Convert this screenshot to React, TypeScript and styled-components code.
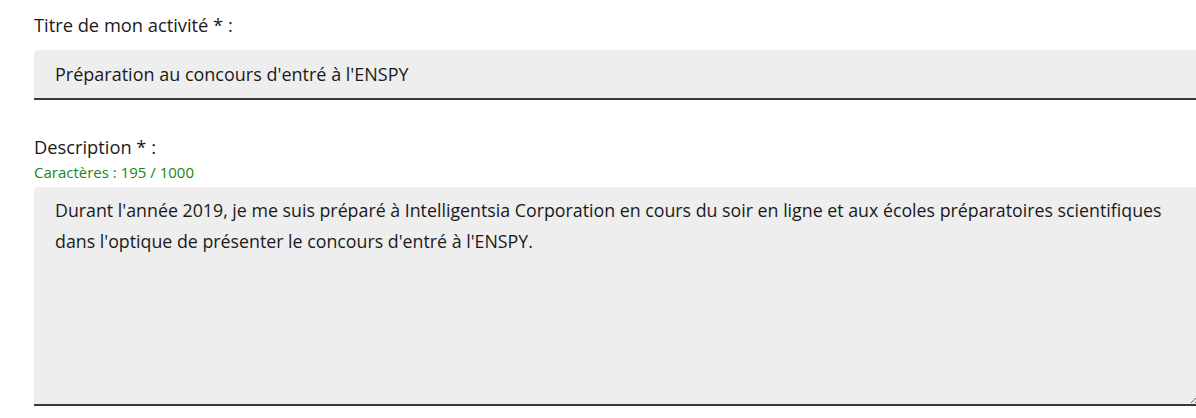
import React, { useState } from 'react'
import styled, { createGlobalStyle } from 'styled-components'

const GlobalStyle = createGlobalStyle`
  body {
    margin: 0;
    background: #fff;
    font-family: "Open Sans", "Noto Sans", sans-serif;
    color: #1e1e1e;
    overflow: hidden;
  }
`

const Form = styled.form`
  display: flex;
  flex-direction: column;
  padding: 13px 0 0 34px;
  width: 1199px;
  box-sizing: border-box;
`

const Field = styled.div<{ gap?: number }>`
  display: flex;
  flex-direction: column;
  margin-bottom: ${({ gap }) => (gap ? gap : 0)}px;
`

const Label = styled.label`
  font-size: 18.3px;
  line-height: 24px;
  color: #1a1a1a;
  margin-bottom: 13px;
`

const Counter = styled.span`
  font-size: 15px;
  line-height: 16px;
  color: #18880f;
  margin-top: -8px;
  margin-bottom: 7px;
`

const TextInput = styled.input`
  height: 50px;
  box-sizing: border-box;
  border: none;
  border-bottom: 2px solid #3a3a3a;
  border-radius: 4px 4px 0 0;
  background: #eeeeee;
  padding: 0 21px;
  font-family: inherit;
  font-size: 18px;
  color: #1a1a1a;
  outline: none;
`

const TextArea = styled.textarea`
  height: 219px;
  box-sizing: border-box;
  border: none;
  border-bottom: 2px solid #3a3a3a;
  border-radius: 4px 4px 0 0;
  background: #eeeeee;
  padding: 8px 21px;
  font-family: inherit;
  font-size: 17.8px;
  line-height: 31px;
  color: #1a1a1a;
  outline: none;
  resize: vertical;
`

const App = () => {
  const [titre, setTitre] = useState("Préparation au concours d'entré à l'ENSPY")
  const [description, setDescription] = useState(
    "Durant l'année 2019, je me suis préparé à Intelligentsia Corporation en cours du soir en ligne et aux écoles préparatoires scientifiques dans l'optique de présenter le concours d'entré à l'ENSPY."
  )

  return (
    <>
      <GlobalStyle />
      <Form>
        <Field gap={35}>
          <Label htmlFor="titre">Titre de mon activité * :</Label>
          <TextInput id="titre" value={titre} onChange={(e) => setTitre(e.target.value)} />
        </Field>
        <Field>
          <Label htmlFor="description">Description * :</Label>
          <Counter>Caractères : {description.length} / 1000</Counter>
          <TextArea
            id="description"
            value={description}
            onChange={(e) => setDescription(e.target.value)}
          />
        </Field>
      </Form>
    </>
  )
}

export default App
